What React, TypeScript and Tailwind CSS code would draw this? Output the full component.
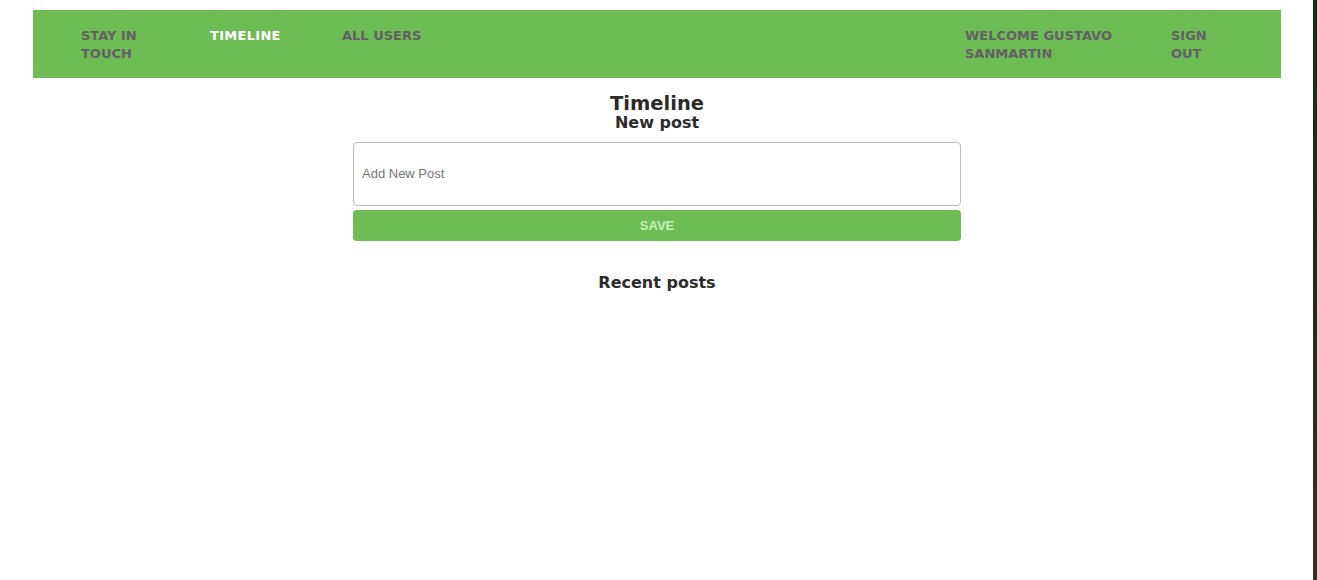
import React from "react";

export default function App() {
  const nav = "font-['DejaVu_Sans',Verdana,sans-serif] font-bold text-[13px] leading-[18px] uppercase";
  return (
    <div className="flex w-[1317px] h-[580px] bg-white">
      <div className="flex-1 flex flex-col">
        <div className="ml-[33px] mt-[10px] w-[1248px] h-[68px] bg-[#6ebc54] flex pt-[17px] pl-[48px] pr-[48px]">
          <div className={`${nav} w-[129px] pr-[39px] text-[#645f66]`}>Stay in touch</div>
          <div className={`${nav} w-[132px] text-white tracking-[0.3px]`}>Timeline</div>
          <div className={`${nav} text-[#645f66]`}>All users</div>
          <div className="flex-1" />
          <div className={`${nav} w-[160px] text-[#645f66]`}>Welcome Gustavo Sanmartin</div>
          <div className="w-[46px]" />
          <div className={`${nav} w-[62px] text-[#645f66]`}>Sign out</div>
        </div>
        <div className="ml-[33px] w-[1248px] flex flex-col items-center">
          <h1 className="mt-[16px] font-['DejaVu_Sans',Verdana,sans-serif] font-bold text-[19.5px] leading-[20px] text-[#2b2b2b]">Timeline</h1>
          <h2 className="font-['DejaVu_Sans',Verdana,sans-serif] font-bold text-[16px] leading-[18px] text-[#2b2b2b]">New post</h2>
          <div className="mt-[10px] w-[608px] h-[64px] border border-[#bdbdbd] rounded-[4px] flex items-center px-[8px]">
            <span className="font-['Liberation_Sans',Arial,sans-serif] text-[13px] text-[#757575]">Add New Post</span>
          </div>
          <button className="mt-[4px] w-[608px] h-[31px] bg-[#6ebc54] rounded-[4px] font-['Liberation_Sans',Arial,sans-serif] font-bold text-[13px] text-[#c9f0b9]">SAVE</button>
          <h2 className="mt-[33px] font-['DejaVu_Sans',Verdana,sans-serif] font-bold text-[16px] leading-[18px] text-[#2b2b2b]">Recent posts</h2>
        </div>
      </div>
      <div className="w-[4px] h-full bg-gradient-to-b from-[#1c2a14] via-[#2a2620] to-[#3a2e1e]" />
    </div>
  );
}
